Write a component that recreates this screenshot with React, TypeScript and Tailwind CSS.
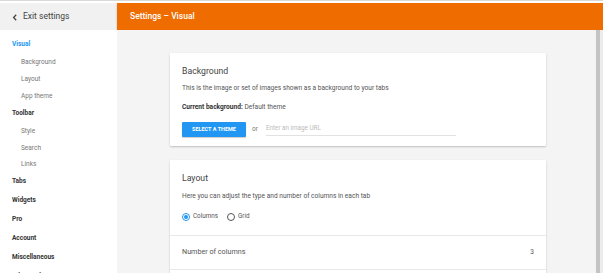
const nav = [
  { label: "Visual", kind: "active", h: "h-[18px]" },
  { label: "Background", kind: "sub", h: "h-[17px]" },
  { label: "Layout", kind: "sub", h: "h-[17px]" },
  { label: "App theme", kind: "sub", h: "h-[17px]" },
  { label: "Toolbar", kind: "group", h: "h-[18px]" },
  { label: "Style", kind: "sub", h: "h-[17px]" },
  { label: "Search", kind: "sub", h: "h-[17px]" },
  { label: "Links", kind: "sub", h: "h-[16px]" },
  { label: "Tabs", kind: "group", h: "h-[18px]" },
  { label: "Widgets", kind: "group", h: "h-[19px]" },
  { label: "Pro", kind: "group", h: "h-[19px]" },
  { label: "Account", kind: "group", h: "h-[19px]" },
  { label: "Miscellaneous", kind: "group", h: "h-[19px]" },
  { label: "Advanced", kind: "group", h: "h-[19px]" },
];

function Sidebar() {
  return (
    <aside className="flex w-[117px] shrink-0 flex-col overflow-hidden bg-white">
      <div className="flex h-[27px] shrink-0 items-center gap-[5px] bg-[#f1f1f1] pl-[12px] text-[8.5px] text-[#444]">
        <svg width="6" height="7" viewBox="0 0 6 7" className="mt-[1px]">
          <path d="M4.2 0.8 L1.6 3.5 L4.2 6.2" fill="none" stroke="#444" strokeWidth="1.3" />
        </svg>
        <span>Exit settings</span>
      </div>
      <nav className="flex shrink-0 flex-col pt-[6px] text-[6.5px]">
        {nav.map((item) => (
          <div
            key={item.label}
            className={`flex shrink-0 items-center ${item.h} ${
              item.kind === "sub"
                ? "pl-[21px] text-[#777]"
                : item.kind === "active"
                  ? "pl-[12px] font-bold text-[#2196f3]"
                  : "pl-[12px] font-bold text-[#333]"
            }`}
          >
            {item.label}
          </div>
        ))}
      </nav>
    </aside>
  );
}

function Radio({ label, checked }: { label: string; checked?: boolean }) {
  return (
    <label className="flex items-center gap-[3px]">
      <span
        className={`flex h-[8px] w-[8px] items-center justify-center rounded-full border ${
          checked ? "border-[#2196f3]" : "border-[#555]"
        }`}
      >
        {checked && <span className="h-[4px] w-[4px] rounded-full bg-[#2196f3]" />}
      </span>
      <span>{label}</span>
    </label>
  );
}

export default function App() {
  return (
    <div
      className="flex h-[273px] w-[603px] flex-col overflow-hidden bg-white"
      style={{ fontFamily: "Roboto, 'Liberation Sans', sans-serif" }}
    >
      <div className="h-[3px] shrink-0 border-t border-[#d9d9d9] bg-white" />
      <div className="flex min-h-0 flex-1">
        <Sidebar />
        <div className="flex min-w-0 flex-1 flex-col">
          <header className="flex h-[27px] shrink-0 items-center bg-[#ef6c00] pl-[13px] text-[8.5px] font-medium text-white shadow-[0_1px_2px_rgba(0,0,0,0.2)]">
            Settings – Visual
          </header>
          <div className="flex min-h-0 flex-1">
            <main className="flex-1 overflow-hidden bg-[#f4f4f4] pl-[53px] pt-[23px]">
              <div className="flex w-[376px] flex-col gap-[14px]">
                <section className="rounded-[1px] bg-white px-[12px] pb-[9px] pt-[12px] shadow-[0_1px_2px_rgba(0,0,0,0.22)]">
                  <h2 className="text-[8.7px] leading-[12px] text-[#444]">Background</h2>
                  <p className="mt-[7px] text-[6.6px] leading-[8px] text-[#555]">
                    This is the image or set of images shown as a background to your tabs
                  </p>
                  <p className="mt-[11px] text-[6.6px] leading-[8px] text-[#555]">
                    <span className="font-bold text-[#333]">Current background:</span> Default theme
                  </p>
                  <div className="mt-[11px] flex items-center">
                    <button className="flex h-[15px] w-[64px] items-center justify-center rounded-[1px] bg-[#2196f3] text-[5.5px] font-bold text-white shadow-[0_1px_1px_rgba(0,0,0,0.2)]">
                      SELECT A THEME
                    </button>
                    <span className="ml-[6px] text-[6.5px] text-[#777]">or</span>
                    <div className="ml-[8px] flex h-[13px] w-[190px] items-center border-b border-[#e2e2e2] text-[6.3px] text-[#bbb]">
                      Enter an image URL
                    </div>
                  </div>
                </section>
                <section className="rounded-[1px] bg-white shadow-[0_1px_2px_rgba(0,0,0,0.22)]">
                  <div className="px-[12px] pb-[14px] pt-[12px]">
                    <h2 className="text-[8.7px] leading-[12px] text-[#444]">Layout</h2>
                    <p className="mt-[8px] text-[6.6px] leading-[8px] text-[#555]">
                      Here you can adjust the type and number of columns in each tab
                    </p>
                    <div className="mt-[13px] flex h-[8px] items-center gap-[9px] text-[6.3px] text-[#555]">
                      <Radio label="Columns" checked />
                      <Radio label="Grid" />
                    </div>
                  </div>
                  <div className="flex h-[35px] items-center justify-between border-y border-[#e8e8e8] px-[12px] text-[7.2px] text-[#555]">
                    <span>Number of columns</span>
                    <span className="text-[6.5px]">3</span>
                  </div>
                  <div className="h-[20px]" />
                </section>
              </div>
            </main>
            <div className="flex w-[7px] shrink-0">
              <div className="w-[4px] bg-[#c4c4c4]" />
              <div className="flex-1 bg-[#ececec]" />
            </div>
          </div>
        </div>
      </div>
    </div>
  );
}
